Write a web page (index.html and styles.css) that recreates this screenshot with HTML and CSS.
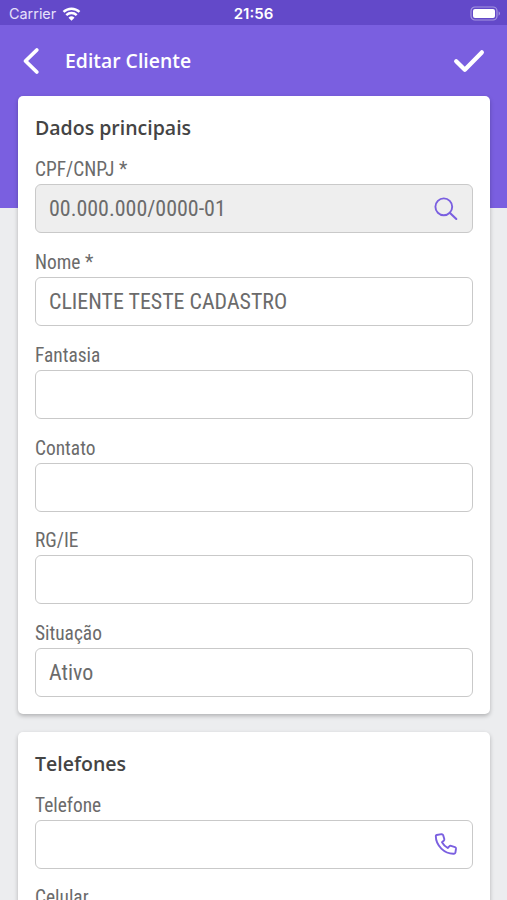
FILE: index.html
```
<!DOCTYPE html>
<html lang="pt-BR">
<head>
    <meta charset="UTF-8">
    <meta name="viewport" content="width=device-width, initial-scale=1.0">
    <title>Editar Cliente</title>
    <link rel="stylesheet" href="styles.css">
</head>
<body>
    <div class="status-bar">
        <div class="carrier">
            <span>Carrier</span>
            <svg class="wifi" viewBox="0 0 18 14" width="19" height="14">
                <path d="M1 4.900a11.600 11.600 0 0 1 16 0M3.800 8.100a7.500 7.500 0 0 1 10.400 0" fill="none" stroke="#fff" stroke-width="2.4"/>
                <path d="M9 13.8L6 10.800a4.300 4.300 0 0 1 6 0z" fill="#fff"/>
            </svg>
        </div>
        <span class="time">21:56</span>
        <svg class="battery" viewBox="0 0 31 15" width="31" height="15">
            <rect x="1" y="1" width="26" height="13" rx="4" fill="none" stroke="#a696e0" stroke-width="1.2"/>
            <rect x="3" y="3" width="22" height="9" rx="2" fill="#fff"/>
            <path d="M28.6 5.2a2.600 2.600 0 0 1 0 4.600z" fill="#a696e0"/>
        </svg>
    </div>

    <header>
        <svg class="back" viewBox="0 0 18 28" width="18" height="28">
            <path d="M14.800 3L3.500 14l11.300 11" fill="none" stroke="#fff" stroke-width="3.8" stroke-linecap="round" stroke-linejoin="round"/>
        </svg>
        <h1>Editar Cliente</h1>
        <svg class="confirm" viewBox="0 0 32 24" width="32" height="24">
            <path d="M3.200 12.300l8.600 8.500L28.800 3.400" fill="none" stroke="#fff" stroke-width="4.300" stroke-linecap="round" stroke-linejoin="round"/>
        </svg>
    </header>

    <main>
        <section class="card">
            <h2>Dados principais</h2>
            <div class="field">
                <label for="cpf">CPF/CNPJ *</label>
                <div class="input-box disabled">
                    <input id="cpf" type="text" value="00.000.000/0000-01" readonly>
                    <svg viewBox="0 0 24 24" width="24" height="24">
                        <circle cx="9.800" cy="9.800" r="8.400" fill="none" stroke="#7a5fe0" stroke-width="1.900"/>
                        <path d="M16 16l6.300 6" stroke="#7a5fe0" stroke-width="2.100" stroke-linecap="round"/>
                    </svg>
                </div>
            </div>
            <div class="field">
                <label for="nome">Nome *</label>
                <div class="input-box"><input id="nome" type="text" value="CLIENTE TESTE CADASTRO"></div>
            </div>
            <div class="field">
                <label for="fantasia">Fantasia</label>
                <div class="input-box"><input id="fantasia" type="text"></div>
            </div>
            <div class="field">
                <label for="contato">Contato</label>
                <div class="input-box"><input id="contato" type="text"></div>
            </div>
            <div class="field">
                <label for="rg">RG/IE</label>
                <div class="input-box"><input id="rg" type="text"></div>
            </div>
            <div class="field">
                <label for="situacao">Situação</label>
                <div class="input-box"><input id="situacao" type="text" value="Ativo"></div>
            </div>
        </section>

        <section class="card">
            <h2>Telefones</h2>
            <div class="field">
                <label for="telefone">Telefone</label>
                <div class="input-box">
                    <input id="telefone" type="tel">
                    <svg viewBox="0 0 24 24" width="24" height="24">
                        <path d="M2.600 3L7.600 2.100Q8.700 2 9.100 3L10.300 7Q10.500 8 9.700 8.700L8 10.300Q10 14 13.700 16L15.300 14.300Q16 13.600 17 13.900L21 15.200Q22.100 15.600 22 16.700L21.400 20.600Q21.200 21.600 20 21.700C10.500 22.100 1.800 13.500 1.800 4.100Q1.800 3.200 2.600 3z" fill="none" stroke="#7a5fe0" stroke-width="1.900" stroke-linejoin="round"/>
                    </svg>
                </div>
            </div>
            <div class="field">
                <label for="celular">Celular</label>
                <div class="input-box"><input id="celular" type="tel"></div>
            </div>
        </section>
    </main>
</body>
</html>
```
FILE: styles.css
```
* {
    box-sizing: border-box;
}

body {
    margin: 0;
    height: 900px;
    overflow: hidden;
    font-family: 'Roboto Condensed', Roboto, sans-serif;
    font-stretch: 75%;
    color: #666;
    background: linear-gradient(#7a5fe0 208px, #ecedef 208px);
}

.status-bar {
    display: grid;
    grid-template-columns: 1fr auto 1fr;
    align-items: center;
    height: 25px;
    padding: 2px 6px 0 9px;
    background-color: #6349c9;
    color: #fff;
    font-family: Inter, sans-serif;
    font-stretch: normal;
    font-size: 14.4px;
}

.carrier {
    display: flex;
    align-items: center;
    gap: 6px;
    color: #e6e0fa;
}

.time {
    margin-right: 3px;
    font-weight: 600;
    font-size: 15px;
}

.battery {
    justify-self: end;
}

header {
    display: flex;
    align-items: center;
    height: 71px;
    padding: 0 22px;
    color: #fff;
}

h1 {
    flex: 1;
    margin: 0 0 0 25px;
    font-family: 'Open Sans', sans-serif;
    font-stretch: normal;
    font-size: 19.4px;
    font-weight: 600;
}

main {
    display: flex;
    flex-direction: column;
    gap: 17.4px;
    padding: 0 17px 0 18px;
}

.card {
    padding: 17px;
    background-color: #fff;
    border-radius: 5px;
    box-shadow: 0 2px 4px rgba(0, 0, 0, 0.25);
}

h2 {
    margin: 0 0 16px;
    font-family: 'Open Sans', sans-serif;
    font-stretch: normal;
    font-size: 19.5px;
    line-height: 29px;
    height: 28px;
    font-weight: 600;
    color: #444;
}

.field + .field {
    margin-top: 16.85px;
}

label {
    display: block;
    height: 27px;
    font-size: 19.4px;
    line-height: 26px;
    color: #6b6b6b;
}

.input-box {
    display: flex;
    align-items: center;
    height: 49px;
    padding: 0 14px 0 13px;
    border: 1.5px solid #c9c9c9;
    border-radius: 6px;
}

.input-box.disabled {
    background-color: #eee;
}

input {
    flex: 1;
    min-width: 0;
    padding: 0;
    border: none;
    outline: none;
    background: none;
    font: inherit;
    font-size: 21.95px;
    color: #6b6b6b;
}
```
